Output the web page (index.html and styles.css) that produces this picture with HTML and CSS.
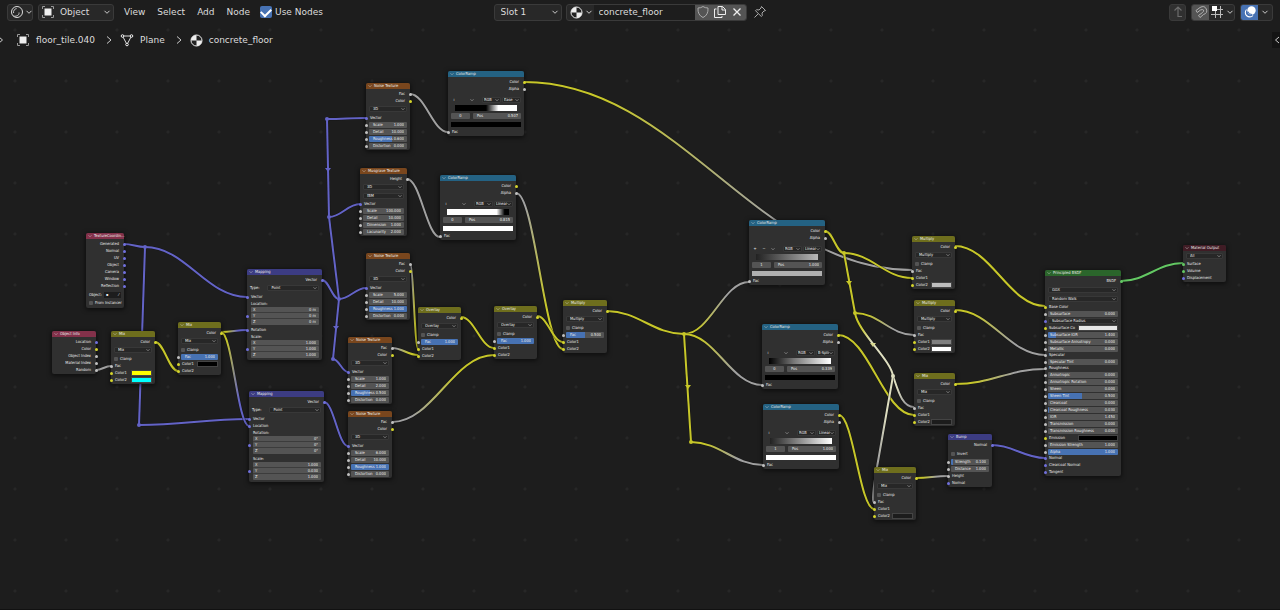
FILE: index.html
```html
<!DOCTYPE html>
<html lang="en">
<head>
<meta charset="utf-8">
<title>Shader Editor</title>
<link rel="stylesheet" href="styles.css">
</head>
<body>
<main class="editor">
  <div class="canvas" id="canvas">
    <svg class="links" id="links" aria-hidden="true"></svg>
  </div>

  <header class="toolbar">
    <div class="side">
      <button class="box editor-type" aria-label="Editor type">
        <svg width="14" height="14" viewBox="0 0 14 14"><circle cx="7" cy="7" r="5.5" fill="none" stroke="#ddd"/><path d="M3.6 8A3.6 3.6 0 0 1 6.6 3.6M3.500 11.200C7 11.500 9.500 10 9 7.500" fill="none" stroke="#ccc"/></svg>
        <svg class="chev" viewBox="0 0 8 8"><path d="M1.5 2.8 4 5.3 6.5 2.8"/></svg>
      </button>
      <div class="box mode">
        <svg width="14" height="14" viewBox="0 0 14 14"><rect x="3.5" y="3.5" width="7" height="7" fill="#eee"/><path d="M1.5 4V1.5H4M10 1.5h2.500V4M12.500 10v2.500H10M4 12.500H1.500V10" fill="none" stroke="#999"/></svg>
        <select aria-label="Shader type"><option>Object</option></select>
        <svg class="chev" viewBox="0 0 8 8"><path d="M1.5 2.8 4 5.3 6.5 2.8"/></svg>
      </div>
      <nav class="menus">
        <button>View</button><button>Select</button><button>Add</button><button>Node</button>
      </nav>
      <label class="use-nodes"><input type="checkbox" checked>Use Nodes</label>
    </div>
    <div class="material">
      <div class="box slot">
        <select aria-label="Slot"><option>Slot 1</option></select>
        <svg class="chev" viewBox="0 0 8 8"><path d="M1.5 2.8 4 5.3 6.5 2.8"/></svg>
      </div>
      <div class="box datablock">
        <button class="browse" aria-label="Browse material">
          <svg width="13" height="13" viewBox="0 0 13 13"><circle cx="6.500" cy="6.500" r="5.500" fill="#222" stroke="#eee"/><path d="M6.500 1v5.500H1A5.500 5.500 0 0 1 6.500 1M6.500 6.500H12A5.500 5.500 0 0 1 6.500 12Z" fill="#eee"/></svg>
          <svg class="chev" viewBox="0 0 8 8"><path d="M1.5 2.8 4 5.3 6.5 2.8"/></svg>
        </button>
        <input type="text" value="concrete_floor" aria-label="Material name">
        <button class="act" aria-label="Fake user"><svg width="14" height="14" viewBox="0 0 14 14"><path d="M7 1.500Q9 3 12 3q.5 7-5 9.500Q1.500 10 2 3q3 0 5-1.500Z" fill="none" stroke="#aaa"/></svg></button>
        <button class="act" aria-label="New material"><svg width="14" height="14" viewBox="0 0 14 14"><path d="M5 1.500h4.500L12.500 4.500V9.500H5ZM9 1.500V5h3.500M3.500 4h-2v8.500H9V11" fill="none" stroke="#eee"/></svg></button>
        <button class="act" aria-label="Unlink"><svg width="14" height="14" viewBox="0 0 14 14"><path d="M3.500 3.500l7 7M10.500 3.500l-7 7" stroke="#eee" stroke-width="1.300"/></svg></button>
      </div>
      <button class="plain" aria-label="Pin"><svg width="14" height="14" viewBox="0 0 14 14"><path d="M8.500 1.500l4 4-1.500.5-2 2 .3 2.500-1 1L2.500 5.700l1-1L6 5l2-2ZM5 9l-3.500 3.500" fill="none" stroke="#aaa"/></svg></button>
    </div>
    <div class="side end">
      <button class="box square" aria-label="Parent node tree"><svg width="14" height="14" viewBox="0 0 14 14"><path d="M7 2v9.500h4M3.500 5.500 7 2l3.500 3.500" fill="none" stroke="#6c6c6c" stroke-width="1.200"/></svg></button>
      <div class="box pair">
        <button class="act" aria-label="Snap"><svg width="14" height="14" viewBox="0 0 14 14"><path d="M2 5.500 6 2.500Q10.500 0 12.300 4T9.500 9.500L6 12.500 4.500 10.500 8.500 7.500Q10.300 6 9.500 5T6.500 5L3.200 7.500Z" fill="none" stroke="#b0b0b0"/></svg></button>
        <button class="drop" aria-label="Snap element"><svg width="14" height="14" viewBox="0 0 14 14"><path d="M5.500 6v7M10.500 1v12M1 9.500h12M6 4.500h7" stroke="#bbb"/><rect x="2" y="1" width="5" height="5" fill="#fff"/></svg><svg class="chev" viewBox="0 0 8 8"><path d="M1.5 2.8 4 5.3 6.5 2.8"/></svg></button>
      </div>
      <div class="box pair">
        <button class="act on" aria-label="Overlays"><svg width="14" height="14" viewBox="0 0 14 14"><circle cx="8.500" cy="5.500" r="4.200" fill="#fff"/><path d="M3.500 4.500a4.300 4.300 0 1 0 6.500 6" fill="none" stroke="#fff" stroke-width="1.100"/><path d="M5 6.500A4 4 0 0 0 9 9.500" fill="none" stroke="#4772b3"/></svg></button>
        <button class="drop small" aria-label="Overlay options"><svg class="chev" viewBox="0 0 8 8"><path d="M1.5 2.8 4 5.3 6.5 2.8"/></svg></button>
      </div>
    </div>
  </header>

  <nav class="crumbs" aria-label="Context path">
    <button class="edge" aria-label="Open tool shelf"><svg class="sep" viewBox="0 0 6 10"><path d="M1 2l3.500 3L1 8"/></svg></button>
    <span class="crumb"><svg width="14" height="14" viewBox="0 0 14 14"><rect x="3.500" y="3.500" width="7" height="7" fill="#eee"/><path d="M1.500 4V1.500H4M10 1.500h2.500V4M12.500 10v2.500H10M4 12.500H1.500V10" fill="none" stroke="#999"/></svg>floor_tile.040</span>
    <svg class="sep" viewBox="0 0 6 10"><path d="M1 1.500l4 3.500-4 3.500"/></svg>
    <span class="crumb"><svg width="14" height="14" viewBox="0 0 14 14"><path d="M2.500 3h9L7 11.500Z" fill="none" stroke="#ddd"/><g fill="#1d1d1d" stroke="#eee"><circle cx="2.500" cy="3" r="1.300"/><circle cx="11.500" cy="3" r="1.300"/><circle cx="7" cy="11.500" r="1.300"/></g></svg>Plane</span>
    <svg class="sep" viewBox="0 0 6 10"><path d="M1 1.500l4 3.500-4 3.500"/></svg>
    <span class="crumb"><svg width="13" height="13" viewBox="0 0 13 13"><circle cx="6.500" cy="6.500" r="5.500" fill="#222" stroke="#eee"/><path d="M6.500 1v5.500H1A5.500 5.500 0 0 1 6.500 1M6.500 6.500H12A5.500 5.500 0 0 1 6.500 12Z" fill="#eee"/></svg>concrete_floor</span>
    <button class="edge right" aria-label="Open sidebar"><svg class="sep" viewBox="0 0 6 10"><path d="M5 2 1.500 5 5 8"/></svg></button>
  </nav>
</main>
<script src="nodes.js"></script>
</body>
</html>
```
FILE: styles.css
```css
* { box-sizing: border-box; }

body {
  margin: 0;
  background: #1d1d1d;
  color: #dcdcdc;
  font: 9px/12px "DejaVu Sans", sans-serif;
}

button, input, select {
  margin: 0;
  padding: 0;
  border: 0;
  background: none;
  color: inherit;
  font: inherit;
  appearance: none;
  min-width: 0;
}

svg { display: block; flex: none; }

.editor {
  position: relative;
  min-height: 100vh;
  overflow: hidden;
  border-bottom: 1px solid #111;
}

.canvas {
  position: absolute;
  inset: 0;
  background: radial-gradient(circle at 15px 30px, #272727 1px, transparent 2px) 0 0 / 51px 51px;
  color: #ececec;
  font-family: "DejaVu Sans Condensed", "DejaVu Sans", sans-serif;
  font-size: 4px;
  line-height: 6px;
}

.links { position: absolute; inset: 0; width: 100%; height: 100%; fill: none; }
.links .edge-line { stroke: #111; stroke-width: 3; stroke-opacity: .6; }
.links .line { stroke-width: 2; }

/* toolbar */
.toolbar {
  position: relative;
  display: flex;
  align-items: center;
  height: 24px;
  padding: 0 7px;
}
.side { display: flex; flex: 1; align-items: center; gap: 5px; }
.side.end { justify-content: flex-end; }
.box {
  display: flex;
  align-items: center;
  height: 17px;
  border: 1px solid #3a3a3a;
  border-radius: 3px;
  background: #282828;
  overflow: hidden;
}
.chev { width: 8px; height: 8px; fill: none; stroke: #ccc; }
.editor-type { width: 26px; padding: 0 2px; gap: 1px; }
.mode { width: 76px; padding: 0 2px; gap: 5px; }
.mode select, .slot select { flex: 1; height: 15px; }
.menus { display: flex; gap: 12px; padding: 0 5px; }
.use-nodes { display: flex; align-items: center; gap: 3px; }
.use-nodes input {
  width: 12px;
  height: 12px;
  border-radius: 2px;
  background: #4772b3;
  display: grid;
  place-items: center;
}
.use-nodes input::before {
  content: "";
  width: 8px;
  height: 5px;
  margin-bottom: 2px;
  border: solid #fff;
  border-width: 0 0 2px 2px;
  transform: rotate(-45deg);
}
.material { display: flex; align-items: center; gap: 4px; margin-right: 18px; }
.slot { width: 68px; padding: 0 2px 0 6px; }
.datablock input { width: 101px; height: 15px; padding: 0 5px; background: #1d1d1d; }
.browse { display: flex; align-items: center; gap: 2px; width: 27px; padding: 0 3px; }
.act { display: grid; place-items: center; width: 17px; height: 17px; background: #545454; }
.act.on { background: #4772b3; }
.plain { padding: 0 2px; }
.square { width: 17px; justify-content: center; background: #303030; }
.drop { display: flex; align-items: center; justify-content: center; gap: 2px; width: 25px; }
.drop.small { width: 14px; }

/* context path */
.crumbs { position: relative; display: flex; align-items: center; gap: 8px; height: 32px; }
.crumb { display: flex; align-items: center; gap: 6px; padding-right: 3px; }
.sep { width: 6px; height: 10px; fill: none; stroke: #ccc; }
.edge { width: 4px; margin-right: 4px; display: flex; justify-content: flex-end; }
.edge.right { margin: 0 0 0 auto; width: 8px; background: #141414; height: 16px; align-items: center; }

/* nodes */
.node {
  position: absolute;
  padding-bottom: 1px;
  border-radius: 2px;
  background: #303030;
  box-shadow: 0 1px 4px 1px rgba(0, 0, 0, .5);
}
.node h2 {
  display: flex;
  align-items: center;
  gap: 2px;
  height: 6px;
  margin: 0 0 1px;
  padding: 0 0 0 2px;
  border-radius: 2px 2px 0 0;
  font: inherit;
}
.node h2 span { white-space: nowrap; }
.node .chev { width: 4px; height: 4px; }
.input h2 { background: #83314a; }
.texture h2 { background: #79461d; }
.vector h2 { background: #3c3c83; }
.converter h2 { background: #246283; }
.color h2 { background: #6e6e1d; }
.shader h2 { background: #2b652b; }
.output h2 { background: #401c25; }

.row {
  position: relative;
  display: flex;
  align-items: center;
  height: 7px;
  padding: 0 3px;
  white-space: nowrap;
}
.row.short { height: 6px; }
.row.tight { height: 8px; }
.row.tall { height: 10px; }
.row.out { justify-content: flex-end; padding-right: 5px; }
.row.in { padding-left: 4px; }
.gap { height: 1px; }
.gap.two { height: 2px; }
.gap.four { height: 4px; }

.socket {
  position: absolute;
  left: -1px;
  top: 50%;
  width: 3px;
  height: 3px;
  margin-top: -1px;
  border-radius: 50%;
  background: var(--socket);
}
.out .socket { left: auto; right: -2px; }
.y { --socket: #d4d42c; }
.g { --socket: #c0c0c0; }
.v { --socket: #7070dc; }
.s { --socket: #63c763; }

.drop-field {
  display: flex;
  flex: 1;
  align-items: center;
  height: 6px;
  padding: 0 1px 0 3px;
  border: 1px solid #383838;
  border-radius: 1px;
  background: #272727;
}
.drop-field select { flex: 1; height: 6px; line-height: 6px; }
.field {
  display: flex;
  flex: 1;
  align-items: center;
  height: 6px;
  padding: 0 3px 0 4px;
  border-radius: 1px;
  background: #545454;
}
.wide .field { padding-left: 2px; }
.field input { flex: 1; width: 0; height: 6px; text-align: right; }
.check { display: flex; align-items: center; gap: 2px; }
.check input { width: 4px; height: 4px; border-radius: 1px; background: #545454; }
.swatch { width: 21px; height: 6px; margin-left: auto; border: 1px solid #444; }
.wide .swatch { width: 40px; }
.picker { flex: 1; display: flex; align-items: center; height: 6px; margin-left: 2px; padding: 0 2px; background: #1d1d1d; justify-content: space-between; }
.kind { gap: 8px; }

.axes { position: relative; display: grid; padding: 0 3px 0 4px; }
.axes .field { height: 6px; border-bottom: 1px solid #3c3c3c; }
.axes .field:last-child { border-bottom: 0; }

.ramp-tools { gap: 1px; }
.ramp-tools button { width: 8px; height: 6px; line-height: 6px; display: grid; place-items: center; }
.ramp-tools button:nth-of-type(1) { margin-left: -1px; }
.ramp-tools button:last-of-type { margin-right: auto; }
.ramp-tools.sparse button:last-of-type { margin-left: 9px; }
.ramp-tools .drop-field { flex: none; width: 19px; padding: 0 1px; }
.ramp { height: 9px; padding: 0 7px; }
.ramp div { flex: 1; height: 6px; }
.pos { height: 8px; gap: 3px; }
.pos .field:first-child { flex: none; width: 19px; padding: 0; }
.pos .field:first-child input { text-align: center; }
.bar { height: 8px; }
.bar button { flex: 1; height: 5px; }
```
FILE: nodes.js
```js
const chev = '<svg class="chev" viewBox="0 0 8 8"><path d="M1 2.500 4 5.500 7 2.500"/></svg>';
const socket = (c) => (c ? `<i class="socket ${c}"></i>` : '');
const row = (cls, html) => `<div class="row ${cls}">${html}</div>`;

const out = (name, c) => row('out', name + socket(c));
const inp = (name, c, size = '') => row('in ' + size, socket(c) + name);
const pick = (name, label = name) =>
  `<span class="drop-field"><select aria-label="${label}"><option>${name}</option></select>${chev}</span>`;
const sel = (name, size = 'tall') => row(size, pick(name));
const box = (name, value, fill = 0) =>
  `<label class="field" style="background-image:linear-gradient(90deg,#4772b3 ${fill}%,transparent ${fill}%)">${name}<input value="${value}" aria-label="${name || 'Stop'}"></label>`;
const num = (name, value, fill = 0, c = 'g') => row('num', socket(c) + box(name, value, fill));
const check = (name, size = '') => row(size, `<label class="check"><input type="checkbox">${name}</label>`);
const swatch = (name, color, c = 'y') =>
  row('in', `${socket(c)}${name}<button class="swatch" aria-label="${name}" style="background:${color}"></button>`);
const axes = (values, c) =>
  `<div class="axes">${socket(c)}${['X', 'Y', 'Z'].map((a, i) => box(a, values[i])).join('')}</div>`;
const gap = (size = '') => `<div class="gap ${size}"></div>`;

const mix = (mode, fac, c1, c2) => [
  out('Color', 'y'), sel(mode), check('Clamp'),
  fac === null ? inp('Fac', 'g') : num('Fac', fac.toFixed(3), fac * 100),
  c1 ? swatch('Color1', c1) : inp('Color1', 'y'),
  c2 ? swatch('Color2', c2) : inp('Color2', 'y')
];
const noise = (scale, detail, rough, fill) => [
  out('Fac', 'g'), out('Color', 'y'), sel('3D'), inp('Vector', 'v'),
  num('Scale', scale), num('Detail', detail), num('Roughness', rough, fill), num('Distortion', '0.000')
];
const fullTools = `<button aria-label="Add stop">+</button><button aria-label="Remove stop">−</button><button aria-label="Ramp tools">${chev}</button>`;
const sparseTools = `<button aria-label="Stops">ı</button><button aria-label="Ramp tools">${chev}</button>`;
const ramp = (mode, stops, index, pos, color, full = false) => [
  out('Color', 'y'), out('Alpha', 'g'), gap('four'),
  row('ramp-tools' + (full ? '' : ' sparse'), (full ? fullTools : sparseTools) + pick('RGB') + pick(mode)),
  row('ramp', `<div style="background:linear-gradient(90deg,${stops})"></div>`),
  row('pos', box('', index) + box('Pos', pos)),
  row('bar', `<button aria-label="Stop color" style="background:${color}"></button>`),
  inp('Fac', 'g')
];
const type = row('tall kind', 'Type:' + pick('Point', 'Type'));

const nodes = [
  ['input', 'TextureCoordin…', 86, 233, 38, [
    ...['Generated', 'Normal', 'UV', 'Object', 'Camera', 'Window', 'Reflection'].map((n) => out(n, 'v')),
    gap('two'),
    row('tight', 'Object:<button class="picker" aria-label="Object"><span>▪</span><span>⁄</span></button>'),
    check('From Instancer', 'tight')
  ]],
  ['input', 'Object Info', 52, 331, 44, [
    out('Location', 'v'), out('Color', 'y'), out('Object Index', 'g'), out('Material Index', 'g'), out('Random', 'g')
  ]],
  ['color', 'Mix', 111, 331, 44, mix('Mix', null, '#ffff00', '#00ffff')],
  ['color', 'Mix', 178, 322, 43, mix('Mix', 1, '#000', null)],
  ['vector wide', 'Mapping', 247, 269, 75, [
    out('Vector', 'v'), type, inp('Vector', 'v'), inp('Location:'),
    axes(['0 m', '0 m', '0 m'], 'v'), gap(), inp('Rotation', 'v'), inp('Scale:'),
    axes(['1.000', '1.000', '1.000'], 'v'), gap()
  ]],
  ['vector wide', 'Mapping', 249, 391, 75, [
    out('Vector', 'v'), type, inp('Vector', 'v'), inp('Location', 'v'), inp('Rotation:'),
    axes(['0°', '0°', '0°'], 'v'), gap(), inp('Scale:'),
    axes(['1.000', '0.030', '1.000'], 'v'), gap()
  ]],
  ['texture', 'Noise Texture', 366, 83, 44, noise('1.000', '10.000', '0.600', 60)],
  ['texture', 'Musgrave Texture', 360, 168, 47, [
    out('Height', 'g'), sel('3D'), sel('fBM', 'tight'), inp('Vector', 'v'),
    num('Scale', '100.000'), num('Detail', '10.000'), num('Dimension', '1.000'), num('Lacunarity', '2.000')
  ]],
  ['texture', 'Noise Texture', 366, 253, 44, noise('5.000', '10.000', '1.000', 100)],
  ['texture', 'Noise Texture', 348, 337, 44, noise('1.000', '2.000', '0.500', 50)],
  ['texture', 'Noise Texture', 348, 411, 44, noise('6.000', '10.000', '1.000', 100)],
  ['converter', 'ColorRamp', 448, 71, 76, ramp('Ease', '#000 50%,#fff 70%', '0', '0.507', '#000')],
  ['converter', 'ColorRamp', 440, 175, 76, ramp('Linear', '#fff 80%,#000 93%', '0', '0.815', '#fff')],
  ['color', 'Overlay', 418, 307, 43, mix('Overlay', 1, null, null)],
  ['color', 'Overlay', 494, 306, 43, mix('Overlay', 1, null, null)],
  ['color', 'Multiply', 563, 300, 44, mix('Multiply', 0.5, null, null)],
  ['converter', 'ColorRamp', 749, 220, 76, ramp('Linear', '#222,#b8b8b8', '1', '1.000', '#b0b0b0', true)],
  ['converter', 'ColorRamp', 762, 324, 76, ramp('B-Spline', '#000,#777 40%,#fff', '0', '0.339', '#000')],
  ['converter', 'ColorRamp', 763, 404, 76, ramp('Linear', '#222,#fff', '1', '1.000', '#fff')],
  ['color', 'Multiply', 912, 236, 43, mix('Multiply', null, null, '#bdbdbd')],
  ['color', 'Multiply', 914, 300, 41, mix('Multiply', null, '#808080', '#fff')],
  ['color', 'Mix', 914, 373, 41, mix('Mix', null, null, '#1c1c1c')],
  ['color', 'Mix', 874, 467, 42, mix('Mix', null, null, '#1c1c1c')],
  ['vector', 'Bump', 948, 434, 44, [
    out('Normal', 'v'), gap('two'), check('Invert'), gap(),
    num('Strength', '0.100', 5), num('Distance', '1.000'), inp('Height', 'g'), inp('Normal', 'v')
  ]],
  ['shader wide', 'Principled BSDF', 1045, 270, 76, [
    out('BSDF', 's'), gap(), sel('GGX'), sel('Random Walk', 'tight'), inp('Base Color', 'y'),
    num('Subsurface', '0.000'), row('', socket('v') + pick('Subsurface Radius')),
    swatch('Subsurface Co', '#e7e7e7'), num('Subsurface IOR', '1.400', 12),
    num('Subsurface Anisotropy', '0.000'), num('Metallic', '0.000'), inp('Specular', 'g', 'short'),
    num('Specular Tint', '0.000'), inp('Roughness', 'g', 'short'), num('Anisotropic', '0.000'),
    num('Anisotropic Rotation', '0.000'), num('Sheen', '0.000'), num('Sheen Tint', '0.500', 49),
    num('Clearcoat', '0.000'), num('Clearcoat Roughness', '0.030', 2), num('IOR', '1.450'),
    num('Transmission', '0.000'), num('Transmission Roughness', '0.000'), swatch('Emission', '#000'),
    num('Emission Strength', '1.000'), num('Alpha', '1.000', 100), inp('Normal', 'v', 'short'),
    inp('Clearcoat Normal', 'v'), inp('Tangent', 'v')
  ]],
  ['output', 'Material Output', 1183, 245, 43, [
    sel('All', 'tight'), inp('Surface', 's'), inp('Volume', 's'), inp('Displacement', 'v')
  ]]
];

document.getElementById('canvas').insertAdjacentHTML('beforeend', nodes.map(([kind, title, x, y, w, rows]) =>
  `<section class="node ${kind}" style="left:${x}px;top:${y}px;width:${w}px"><h2>${chev}<span>${title}</span></h2>${rows.join('')}</section>`
).join(''));

const Y = '#c7c729', G = '#a1a1a1', V = '#6363c7', S = '#63c763', P = '#d8d890', W = '#dedec0';
/* x1, y1, x2, y2, start color, end color, handle factor */
const links = [
  [124, 244, 145, 247, V, V], [145, 247, 247, 297, V, V], [145, 247, 139, 425, V, V, 0],
  [139, 425, 249, 419, V, V], [96, 370, 111, 366, G, G], [155, 342, 178, 371, Y, Y],
  [221, 332, 247, 330, Y, V], [221, 332, 249, 426, Y, V],
  [322, 280, 339, 299, V, V], [327, 119, 329, 217, V, V, 0], [329, 217, 339, 299, V, V, 0],
  [339, 299, 333, 359, V, V, 0], [333, 359, 348, 372, V, V], [339, 299, 366, 288, V, V],
  [329, 217, 360, 204, V, V], [327, 119, 366, 118, V, V], [324, 402, 348, 446, V, V],
  [410, 94, 448, 132, G, G], [407, 179, 440, 237, G, G], [516, 193, 563, 349, G, Y],
  [410, 264, 418, 349, G, Y], [392, 348, 418, 355, G, Y], [392, 422, 494, 355, G, Y],
  [461, 317, 494, 348, Y, Y], [537, 316, 563, 342, Y, Y],
  [607, 311, 684, 334, Y, Y], [684, 334, 749, 282, Y, G], [684, 334, 762, 385, Y, G],
  [684, 334, 691, 442, Y, Y, 0], [691, 442, 763, 465, Y, G],
  [524, 82, 912, 270, Y, G], [825, 231, 844, 253, Y, Y], [844, 253, 912, 278, Y, Y],
  [844, 253, 855, 313, Y, Y, 0], [855, 313, 914, 335, Y, G],
  [838, 335, 914, 415, Y, Y], [839, 415, 874, 509, Y, Y],
  [955, 246, 1045, 306, Y, Y], [955, 310, 1045, 355, Y, G], [955, 384, 1045, 369, Y, G],
  [916, 478, 948, 476, Y, G], [992, 445, 1045, 458, V, V], [1121, 281, 1183, 263, S, S]
];
const curves = links.map(([x1, y1, x2, y2, a, b, k = 0.4]) => {
  const h = (x2 - x1) * k;
  return [`M${x1} ${y1}C${x1 + h} ${y1} ${x2 - h} ${y2} ${x2} ${y2}`, a, b, x1, x2];
});
curves.push(
  ['M855 313C858 332 891 360 893 376', Y, W, 855, 880],
  ['M893 376C898 390 902 407 914 407', W, G, 893, 912],
  ['M893 376L877 467Q871 502 874 502', G, W, 874, 893]
);

const knots = [
  [145, 247, V], [139, 425, V], [327, 119, V], [329, 217, V], [339, 299, V],
  [333, 359, V], [684, 334, Y], [691, 442, Y], [844, 253, Y], [855, 313, Y], [893, 376, W]
];
const arrows = [[328, 169, V], [336, 327, V], [688, 386, Y], [849, 282, Y], [873, 344, P]];

document.getElementById('links').innerHTML = curves.map(([d, a, b, x1, x2], i) =>
  `<linearGradient id="l${i}" gradientUnits="userSpaceOnUse" x1="${x1}" y1="0" x2="${x2}" y2="0"><stop offset=".2" stop-color="${a}"/><stop offset=".65" stop-color="${b}"/></linearGradient>` +
  `<path class="edge-line" d="${d}"/><path class="line" d="${d}" stroke="url(#l${i})"/>`
).join('') +
  knots.map(([x, y, c]) => `<circle cx="${x}" cy="${y}" r="2" fill="${c}"/>`).join('') +
  arrows.map(([x, y, c]) => `<path d="M${x - 3} ${y - 1}H${x + 3}L${x} ${y + 3}Z" fill="${c}"/>`).join('');
```
